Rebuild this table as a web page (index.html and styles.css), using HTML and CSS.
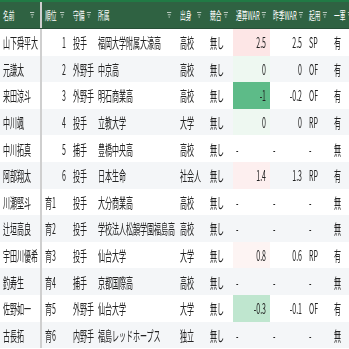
FILE: index.html
```html
<!DOCTYPE html>
<html lang="ja">
<head>
<meta charset="utf-8">
<link rel="stylesheet" href="styles.css">
</head>
<body>
<div class="sheet">
  <div class="row head">
    <div class="hc frozen"><span>名前</span><svg class="flt" viewBox="0 0 9 6"><path d="M0 .5h9M1.5 2.75h6M3 5h3"/></svg></div>
    <div class="hc"><span>順位</span><svg class="flt" viewBox="0 0 9 6"><path d="M0 .5h9M1.5 2.75h6M3 5h3"/></svg></div>
    <div class="hc"><span>守備</span><svg class="flt" viewBox="0 0 9 6"><path d="M0 .5h9M1.5 2.75h6M3 5h3"/></svg></div>
    <div class="hc"><span>所属</span><svg class="flt" viewBox="0 0 9 6"><path d="M0 .5h9M1.5 2.75h6M3 5h3"/></svg></div>
    <div class="hc"><span>出身</span><svg class="flt" viewBox="0 0 9 6"><path d="M0 .5h9M1.5 2.75h6M3 5h3"/></svg></div>
    <div class="hc"><span>競合</span><svg class="flt" viewBox="0 0 9 6"><path d="M0 .5h9M1.5 2.75h6M3 5h3"/></svg></div>
    <div class="hc"><span>通算WAR</span><svg class="flt" viewBox="0 0 9 6"><path d="M0 .5h9M1.5 2.75h6M3 5h3"/></svg></div>
    <div class="hc"><span>昨季WAR</span><svg class="flt" viewBox="0 0 9 6"><path d="M0 .5h9M1.5 2.75h6M3 5h3"/></svg></div>
    <div class="hc"><span>起用</span><svg class="flt" viewBox="0 0 9 6"><path d="M0 .5h9M1.5 2.75h6M3 5h3"/></svg></div>
    <div class="hc"><span>一軍</span><svg class="flt" viewBox="0 0 9 6"><path d="M0 .5h9M1.5 2.75h6M3 5h3"/></svg></div>
  </div>

  <div class="row">
    <div class="c frozen">山下舜平大</div><div class="c num">1</div><div class="c">投手</div><div class="c">福岡大学附属大濠高</div><div class="c">高校</div><div class="c">無し</div><div class="c num war-p3">2.5</div><div class="c num">2.5</div><div class="c">SP</div><div class="c">有</div>
  </div>
  <div class="row">
    <div class="c frozen">元謙太</div><div class="c num">2</div><div class="c">外野手</div><div class="c">中京高</div><div class="c">高校</div><div class="c">無し</div><div class="c num war-g0">0</div><div class="c num">0</div><div class="c">OF</div><div class="c">有</div>
  </div>
  <div class="row">
    <div class="c frozen">来田涼斗</div><div class="c num">3</div><div class="c">外野手</div><div class="c">明石商業高</div><div class="c">高校</div><div class="c">無し</div><div class="c num war-g3">-1</div><div class="c num">-0.2</div><div class="c">OF</div><div class="c">有</div>
  </div>
  <div class="row">
    <div class="c frozen">中川颯</div><div class="c num">4</div><div class="c">投手</div><div class="c">立教大学</div><div class="c">大学</div><div class="c">無し</div><div class="c num war-g0">0</div><div class="c num">0</div><div class="c">RP</div><div class="c">有</div>
  </div>
  <div class="row">
    <div class="c frozen">中川拓真</div><div class="c num">5</div><div class="c">捕手</div><div class="c">豊橋中央高</div><div class="c">高校</div><div class="c">無し</div><div class="c">-</div><div class="c">-</div><div class="c">-</div><div class="c">無</div>
  </div>
  <div class="row">
    <div class="c frozen">阿部翔太</div><div class="c num">6</div><div class="c">投手</div><div class="c">日本生命</div><div class="c">社会人</div><div class="c">無し</div><div class="c num war-p2">1.4</div><div class="c num">1.3</div><div class="c">RP</div><div class="c">有</div>
  </div>
  <div class="row">
    <div class="c frozen">川瀬堅斗</div><div class="c">育1</div><div class="c">投手</div><div class="c">大分商業高</div><div class="c">高校</div><div class="c">無し</div><div class="c">-</div><div class="c">-</div><div class="c">-</div><div class="c">無</div>
  </div>
  <div class="row">
    <div class="c frozen">辻垣高良</div><div class="c">育2</div><div class="c">投手</div><div class="c">学校法人松韻学園福島高</div><div class="c">高校</div><div class="c">無し</div><div class="c">-</div><div class="c">-</div><div class="c">-</div><div class="c">無</div>
  </div>
  <div class="row">
    <div class="c frozen">宇田川優希</div><div class="c">育3</div><div class="c">投手</div><div class="c">仙台大学</div><div class="c">大学</div><div class="c">無し</div><div class="c num war-p1">0.8</div><div class="c num">0.6</div><div class="c">RP</div><div class="c">有</div>
  </div>
  <div class="row">
    <div class="c frozen">釣寿生</div><div class="c">育4</div><div class="c">捕手</div><div class="c">京都国際高</div><div class="c">高校</div><div class="c">無し</div><div class="c">-</div><div class="c">-</div><div class="c">-</div><div class="c">無</div>
  </div>
  <div class="row">
    <div class="c frozen">佐野如一</div><div class="c">育5</div><div class="c">外野手</div><div class="c">仙台大学</div><div class="c">大学</div><div class="c">無し</div><div class="c num war-g2">-0.3</div><div class="c num">-0.1</div><div class="c">OF</div><div class="c">有</div>
  </div>
  <div class="row">
    <div class="c frozen">古長拓</div><div class="c">育6</div><div class="c">内野手</div><div class="c">福島レッドホープス</div><div class="c">独立</div><div class="c">無し</div><div class="c">-</div><div class="c">-</div><div class="c">-</div><div class="c">無</div>
  </div>
</div>
</body>
</html>
```

FILE: styles.css
```css
html, body {
  margin: 0;
  padding: 0;
  background: #ffffff;
  overflow: hidden;
  width: 349px;
  height: 349px;
}

.sheet {
  width: 698px;
  transform: scaleX(0.5);
  transform-origin: 0 0;
  font-family: "Noto Sans CJK JP", "Noto Sans", sans-serif;
  color: #222222;
}

.row {
  display: grid;
  grid-template-columns: 84px 56px 50px 164px 60px 52px 74px 72px 50px 36px;
  height: 26.6px;
}

.row:nth-child(odd) {
  background: #f4f6f8;
}

.row.head {
  height: 29px;
  box-sizing: border-box;
  background: #2f6242;
  border-top: 2px solid #217a45;
  border-bottom: 1px solid #274f37;
}

.hc {
  display: flex;
  align-items: center;
  justify-content: space-between;
  padding: 0 11px 0 6px;
  box-sizing: border-box;
  color: #ffffff;
  font-size: 11.5px;
  white-space: nowrap;
  overflow: hidden;
}

.flt {
  width: 9px;
  height: 6px;
  flex: none;
  margin-left: 4px;
  fill: none;
  stroke: #b9c9bf;
  stroke-width: 1.1;
}

.c {
  display: flex;
  align-items: center;
  padding: 0 8px 0 6px;
  box-sizing: border-box;
  font-size: 14px;
  white-space: nowrap;
  overflow: hidden;
}

.c.num {
  justify-content: flex-end;
}

.frozen {
  border-right: 4px solid #cfcfcf;
}

.war-p3 { background: #fde6e6; }
.war-p2 { background: #fdefef; }
.war-p1 { background: #fdf4f3; }
.war-g0 { background: #eef8f1; }
.war-g2 { background: #bfe6cf; }
.war-g3 { background: #5dbb88; }
```
